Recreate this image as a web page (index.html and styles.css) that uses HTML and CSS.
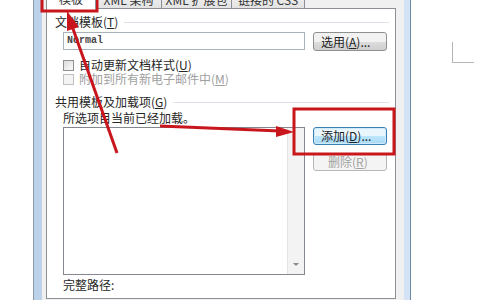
FILE: index.html
```html
<!DOCTYPE html>
<html lang="zh-CN">
<head>
    <meta charset="UTF-8">
    <title>模板和加载项</title>
    <link rel="stylesheet" href="styles.css">
</head>
<body>
    <div class="left-space"></div>
    <div class="frame">
        <div class="dialog">
            <div class="tabs">
                <div class="tab active">模板</div>
                <div class="tab t2">XML 架构</div>
                <div class="tab t3">XML 扩展包</div>
                <div class="tab t4">链接的 CSS</div>
            </div>
            <div class="page">
                <div class="group-title"><span>文档模板(<u>T</u>)</span><i class="rule"></i></div>
                <div class="field-row">
                    <div class="textbox">Normal</div>
                    <div class="btn">选用(<u>A</u>)...</div>
                </div>
                <div class="check-row first"><span class="box"></span>自动更新文档样式(<u>U</u>)</div>
                <div class="check-row disabled"><span class="box"></span>附加到所有新电子邮件中(<u>M</u>)</div>
                <div class="group-title second"><span>共用模板及加载项(<u>G</u>)</span><i class="rule"></i></div>
                <div class="note">所选项目当前已经加载。</div>
                <div class="list-row">
                    <div class="listbox">
                        <div class="list-area"></div>
                        <div class="scrollbar"><span class="arrow"></span></div>
                    </div>
                    <div class="btn-col">
                        <div class="btn default">添加(<u>D</u>)...</div>
                        <div class="btn off">删除(<u>R</u>)</div>
                    </div>
                </div>
                <div class="path">完整路径:</div>
            </div>
        </div>
    </div>
    <div class="doc-side">
        <div class="corner"></div>
    </div>

    <!-- red annotations drawn over the dialog -->
    <svg class="marks" width="500" height="300" viewBox="0 0 500 300">
        <g fill="none" stroke="#c8161d" stroke-width="3" filter="url(#soft)">
            <rect x="42" y="-4" width="55" height="15"/>
            <rect x="294" y="109" width="100" height="45"/>
            <line x1="117" y1="153" x2="72" y2="26"/>
            <line x1="160" y1="126" x2="280" y2="131"/>
        </g>
        <g fill="#c8161d" filter="url(#soft)">
            <polygon points="67,11 79,27 67,31"/>
            <polygon points="294,132 276,126 276,137"/>
        </g>
        <defs>
            <filter id="soft"><feGaussianBlur stdDeviation="0.6"/></filter>
        </defs>
    </svg>
</body>
</html>
```
FILE: styles.css
```css
/* General */
body {
    margin: 0;
    width: 500px;
    height: 300px;
    overflow: hidden;
    display: flex;
    background: #fff;
    font-family: "Noto Sans CJK SC", "Noto Sans", sans-serif;
    font-size: 12px;
    color: #262626;
    position: relative;
}

u {
    text-decoration: underline;
}

.left-space {
    width: 33px;
}

/* Window frame */
.frame {
    width: 362px;
    height: 300px;
    display: flex;
    border-left: 1px solid #8d9aa6;
    border-right: 1px solid #6b8aa8;
    background: linear-gradient(90deg, #bcd2ea, #d3e3f4);
    padding: 0 6px 0 8px;
}

.dialog {
    flex: 1;
    background: #f0f0f0;
    padding: 0 8px 0 4px;
    display: flex;
    flex-direction: column;
}

/* Tabs */
.tabs {
    display: flex;
    height: 22px;
    margin-top: -14px;
    align-items: flex-end;
}

.tab {
    height: 20px;
    box-sizing: border-box;
    border: 1px solid #8c8f96;
    border-bottom: none;
    background: linear-gradient(#f6f6f6, #e3e3e3);
    display: flex;
    align-items: flex-end;
    justify-content: center;
    padding-bottom: 1px;
    line-height: 14px;
    color: #333;
    margin-left: -1px;
}

.tab.active {
    width: 50px;
    height: 23px;
    margin-left: 0;
    margin-bottom: -1px;
    background: #fff;
    position: relative;
    z-index: 1;
    padding-bottom: 3px;
}

.tab.t2 { width: 67px; }
.tab.t3 { width: 71px; }
.tab.t4 { width: 74px; }

/* Tab page */
.page {
    flex: 1;
    background: #fff;
    border: 1px solid #8c8f96;
    padding: 0 6px 0 8px;
    margin-bottom: 1px;
}

.group-title {
    display: flex;
    align-items: center;
    height: 14px;
    line-height: 14px;
    margin-top: 6px;
}

.group-title.second {
    margin-top: 9px;
}

.rule {
    flex: 1;
    height: 1px;
    background: #dde3e8;
    margin-left: 6px;
}

.field-row {
    display: flex;
    gap: 8px;
    margin-top: 3px;
    padding-left: 8px;
    height: 19px;
}

.textbox {
    width: 242px;
    height: 18px;
    box-sizing: border-box;
    border: 1px solid #a9b2bb;
    font-family: "Liberation Mono", monospace;
    font-size: 10px;
    font-weight: bold;
    color: #444;
    line-height: 16px;
    padding-left: 3px;
}

.btn {
    width: 74px;
    height: 19px;
    box-sizing: border-box;
    border: 1px solid #8e8f8f;
    border-radius: 3px;
    background: linear-gradient(#f2f2f2 50%, #dddddd 50%, #cfcfcf);
    line-height: 17px;
    padding-left: 7px;
    color: #222;
}

.btn.default {
    height: 18px;
    border-color: #3c7fb1;
    background: linear-gradient(#eaf6fd 50%, #bee6fd 50%, #a7d9f5);
    box-shadow: inset 0 0 0 1px #cfeafa;
    line-height: 16px;
}

.btn.off {
    height: 18px;
    border-color: #b5b8ba;
    background: #f4f4f4;
    color: #a3a3a3;
    line-height: 16px;
    padding-left: 14px;
}

.check-row {
    display: flex;
    align-items: center;
    height: 14px;
    line-height: 14px;
    padding-left: 8px;
}

.check-row.first {
    margin-top: 7px;
}

.check-row.disabled {
    color: #a0a0a0;
}

.box {
    width: 9px;
    height: 9px;
    border: 1px solid #8f8f8f;
    background: linear-gradient(135deg, #dcdcdc, #fbfbfb);
    margin-right: 5px;
}

.check-row.disabled .box {
    border-color: #c0c0c0;
    background: #f4f4f4;
}

.note {
    margin-top: 2px;
    padding-left: 8px;
    height: 14px;
    line-height: 14px;
}

/* List and buttons */
.list-row {
    display: flex;
    gap: 8px;
    margin-top: 2px;
    padding-left: 8px;
}

.listbox {
    width: 242px;
    height: 148px;
    box-sizing: border-box;
    border: 1px solid #828790;
    display: flex;
}

.list-area {
    flex: 1;
}

.scrollbar {
    width: 16px;
    background: #f3f3f3;
    border-left: 1px solid #e4e4e4;
    display: flex;
    align-items: flex-end;
    justify-content: center;
}

.arrow {
    width: 0;
    height: 0;
    border-left: 3px solid transparent;
    border-right: 3px solid transparent;
    border-top: 3px solid #8a8a8a;
    margin-bottom: 8px;
}

.btn-col {
    display: flex;
    flex-direction: column;
    gap: 8px;
}

.path {
    margin-top: 3px;
    padding-left: 8px;
    height: 14px;
    line-height: 14px;
}

/* Document side with page corner mark */
.doc-side {
    flex: 1;
}

.corner {
    width: 21px;
    height: 20px;
    margin: 42px 0 0 41px;
    border-left: 1px solid #b5b5b5;
    border-bottom: 1px solid #b5b5b5;
}

.marks {
    position: absolute;
    left: 0;
    top: 0;
    pointer-events: none;
}
```
